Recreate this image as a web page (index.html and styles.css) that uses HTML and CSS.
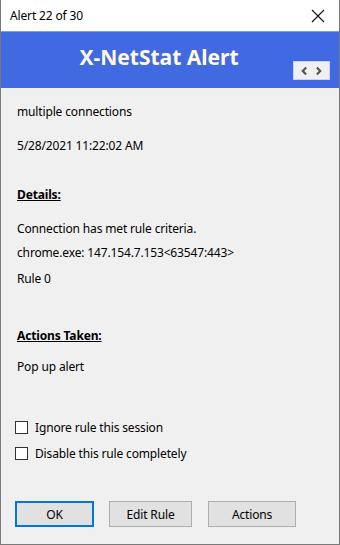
FILE: index.html
```html
<!DOCTYPE html>
<html>
<head>
<meta charset="utf-8">
<link rel="stylesheet" href="styles.css">
</head>
<body>
<div class="window">
  <div class="titlebar">
    <span class="title">Alert 22 of 30</span>
    <span class="close"><svg width="14" height="14" viewBox="0 0 14 14"><path d="M1 1L13 13M13 1L1 13" stroke="#111" stroke-width="1.1" fill="none"/></svg></span>
  </div>
  <div class="header">
    <div class="heading">X-NetStat Alert</div>
    <div class="nav">
      <svg width="36" height="18" viewBox="0 0 36 18"><path d="M12.5 5.5L9 9L12.5 12.5" stroke="#555" stroke-width="2.2" fill="none"/><path d="M23.5 5.5L27 9L23.5 12.5" stroke="#555" stroke-width="2.2" fill="none"/></svg>
    </div>
  </div>
  <div class="content">
    <p class="line l1">multiple connections</p>
    <p class="line l2">5/28/2021 11:22:02 AM</p>
    <p class="line section s1">Details:</p>
    <p class="line l3">Connection has met rule criteria.</p>
    <p class="line l4">chrome.exe: 147.154.7.153&lt;63547:443&gt;</p>
    <p class="line l5">Rule 0</p>
    <p class="line section s2">Actions Taken:</p>
    <p class="line l6">Pop up alert</p>
    <div class="checks">
      <label class="check"><span class="box"></span>Ignore rule this session</label>
      <label class="check"><span class="box"></span>Disable this rule completely</label>
    </div>
    <div class="buttons">
      <button class="btn ok">OK</button>
      <button class="btn edit">Edit Rule</button>
      <button class="btn act">Actions</button>
    </div>
  </div>
</div>
</body>
</html>
```
FILE: styles.css
```css
html, body { margin: 0; padding: 0; }
body { width: 340px; height: 545px; overflow: hidden; font-family: "Noto Sans", "Open Sans", sans-serif; font-size: 12px; color: #000; letter-spacing: -0.15px; }
.window { box-sizing: border-box; width: 340px; height: 545px; border: 1px solid #7a7a7a; border-top: none; background: #f0f0f0; display: flex; flex-direction: column; }
.titlebar { height: 31px; background: #fff; display: flex; align-items: center; justify-content: space-between; padding: 0 9px 0 9px; }
.title { font-size: 12px; }
.close { display: flex; width: 14px; height: 14px; margin-right: 5px; }
.header { position: relative; height: 56px; background: #4169e1; border-top: 1px solid #7f9ceb; display: flex; justify-content: center; }
.heading { margin-top: 11px; margin-left: -22px; font-weight: bold; font-size: 21px; line-height: 28px; color: #fffbd8; letter-spacing: 0; }
.nav { position: absolute; right: 9px; top: 29px; width: 35px; height: 17px; background: #f0f0f0; border: 1px solid #c8d2f2; display: flex; }
.content { padding: 0 0 0 16px; display: flex; flex-direction: column; flex: 1; }
.line { margin: 0; line-height: 16px; white-space: nowrap; }
.l1 { margin-top: 16px; }
.l2 { margin-top: 18px; }
.section { font-weight: bold; text-decoration: underline; }
.s1 { margin-top: 33px; }
.l3 { margin-top: 18px; }
.l4 { margin-top: 8px; }
.l5 { margin-top: 10px; }
.s2 { margin-top: 41px; }
.l6 { margin-top: 15px; }
.checks { margin-top: 44px; margin-left: -2px; display: flex; flex-direction: column; gap: 10px; }
.check { display: flex; align-items: center; height: 16px; }
.box { box-sizing: border-box; width: 13px; height: 13px; border: 1px solid #333; background: #fff; margin-right: 7px; }
.buttons { margin-top: 40px; display: flex; margin-left: -2px; }
.btn { box-sizing: border-box; height: 26px; font-family: "Noto Sans", "Open Sans", sans-serif; font-size: 12px; letter-spacing: -0.15px; background: #e1e1e1; border: 1px solid #adadad; padding: 0; color: #000; }
.ok { width: 79px; border: 2px solid #0078d7; }
.edit { width: 83px; margin-left: 15px; }
.act { width: 88px; margin-left: 16px; }
```
